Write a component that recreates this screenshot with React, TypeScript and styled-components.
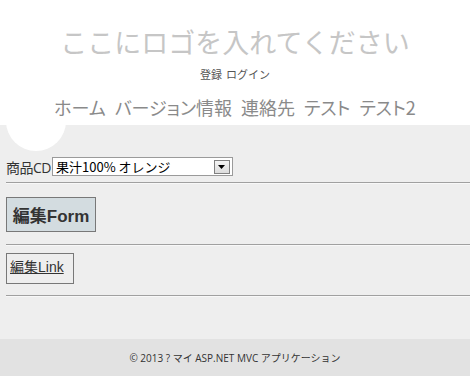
import React from "react";
import styled, { createGlobalStyle } from "styled-components";

const Global = createGlobalStyle`
  html, body { margin: 0; padding: 0; }
  body {
    background: #eeeeee;
    font-family: "Open Sans", "Noto Sans CJK JP", sans-serif;
    color: #333;
  }
`;

const Page = styled.div`
  display: flex;
  flex-direction: column;
  min-height: 100vh;
  width: 470px;
  position: relative;
  overflow: hidden;
`;

const Header = styled.header`
  position: relative;
  z-index: 3;
  background: #ffffff;
  height: 125px;
  display: flex;
  flex-direction: column;
  align-items: center;
  padding-top: 28px;
  box-sizing: border-box;
`;

const Logo = styled.div`
  font-family: "Noto Sans CJK JP", sans-serif;
  font-size: 27px;
  line-height: 27px;
  color: #c6c6c6;
`;

const Login = styled.div`
  margin-top: 13px;
  font-family: "Noto Sans CJK JP", sans-serif;
  font-size: 11px;
  line-height: 12px;
  color: #555;
  display: flex;
  gap: 4px;
`;

const Nav = styled.nav`
  margin-top: 18px;
  display: flex;
  gap: 9px;
  font-family: "Noto Sans CJK JP", sans-serif;
  font-size: 18px;
  line-height: 18px;
  color: #8a8a8a;
  font-feature-settings: "palt";
`;

const Accent = styled.div`
  position: absolute;
  z-index: 2;
  left: 6px;
  top: 91px;
  width: 60px;
  height: 60px;
  border-radius: 50%;
  background: #ffffff;
`;

const Main = styled.main`
  flex: 1;
  background: #eeeeee;
  padding: 32px 0 0 6px;
`;

const Row = styled.div`
  display: flex;
  align-items: center;
  height: 19px;
`;

const Label = styled.span`
  font-family: "Open Sans", "Noto Sans CJK JP", sans-serif;
  font-size: 14px;
  color: #333;
  white-space: nowrap;
  letter-spacing: -0.5px;
  margin-right: 1px;
`;

const SelectBox = styled.div`
  display: flex;
  align-items: center;
  width: 181px;
  height: 19px;
  box-sizing: border-box;
  border: 1px solid #9a9a9a;
  background: #fff;
  padding: 0 2px 0 3px;
`;

const SelectText = styled.span`
  flex: 1;
  font-family: "Noto Sans CJK JP", sans-serif;
  font-size: 13px;
  line-height: 17px;
  color: #000;
  white-space: nowrap;
`;

const Arrow = styled.span`
  width: 16px;
  height: 14px;
  box-sizing: border-box;
  border: 1px solid #808080;
  background: linear-gradient(#f4f4f4, #dcdcdc);
  display: flex;
  align-items: center;
  justify-content: center;
`;

const Rule = styled.hr<{ $top: number }>`
  margin: ${(p) => p.$top}px 0 0 0;
  border: none;
  border-top: 1px solid #a0a0a0;
  border-bottom: 1px solid #f8f8f8;
  height: 0;
`;

const FormButton = styled.button`
  margin-top: 13px;
  width: 90px;
  height: 35px;
  border: 1px solid #787878;
  background: #d3dce0;
  font-family: "Liberation Sans", "Noto Sans CJK JP", sans-serif;
  font-weight: bold;
  font-size: 17px;
  color: #333;
  padding: 0;
  display: block;
`;

const LinkBox = styled.div`
  margin-top: 7px;
  width: 68px;
  height: 31px;
  box-sizing: border-box;
  border: 1px solid #787878;
  padding: 1px 0 0 3px;
`;

const EditLink = styled.a`
  font-family: "Liberation Sans", "Noto Sans CJK JP", sans-serif;
  font-size: 14px;
  line-height: 18px;
  color: #333;
  text-decoration: underline;
`;

const Footer = styled.footer`
  background: #e2e2e2;
  height: 37px;
  display: flex;
  align-items: center;
  justify-content: center;
  font-family: "Open Sans", "Noto Sans CJK JP", sans-serif;
  font-size: 10px;
  color: #333;
`;

export default function App() {
  return (
    <>
      <Global />
      <Page>
        <Header>
          <Logo>ここにロゴを入れてください</Logo>
          <Login>
            <span>登録</span>
            <span>ログイン</span>
          </Login>
          <Nav>
            <span>ホーム</span>
            <span>バージョン情報</span>
            <span>連絡先</span>
            <span>テスト</span>
            <span>テスト2</span>
          </Nav>
        </Header>
        <Accent />
        <Main>
          <Row>
            <Label>商品CD</Label>
            <SelectBox>
              <SelectText>果汁100% オレンジ</SelectText>
              <Arrow>
                <svg width="7" height="4" viewBox="0 0 7 4">
                  <path d="M0 0h7L3.5 4z" fill="#000" />
                </svg>
              </Arrow>
            </SelectBox>
          </Row>
          <Rule $top={6} />
          <FormButton>編集Form</FormButton>
          <Rule $top={12} />
          <LinkBox>
            <EditLink href="#">編集Link</EditLink>
          </LinkBox>
          <Rule $top={11} />
        </Main>
        <Footer>© 2013 ? マイ ASP.NET MVC アプリケーション</Footer>
      </Page>
    </>
  );
}
